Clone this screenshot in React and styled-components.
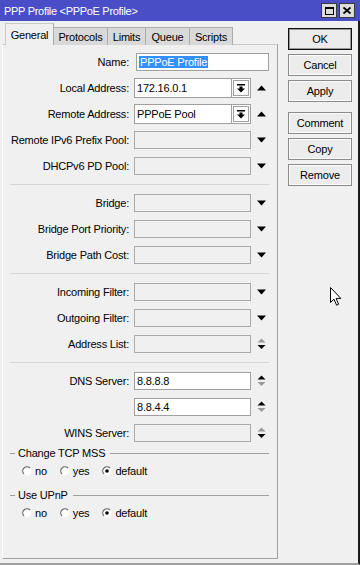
import React from 'react';
import styled, {createGlobalStyle} from 'styled-components';

const Global = createGlobalStyle`
  html, body {
    margin: 0;
    padding: 0;
    background: #f0f0f0;
  }
  body {
    font-family: "Liberation Sans", Arial, sans-serif;
    font-size: 11px;
    letter-spacing: -0.2px;
    color: #000;
  }
`

const Window = styled.div`
  position: relative;
  width: 360px;
  height: 565px;
  display: flex;
  flex-direction: column;
  background: #f0f0f0;
  overflow: hidden;
`
const TitleBar = styled.div`
  height: 21px;
  flex: none;
  display: flex;
  align-items: center;
  justify-content: space-between;
  padding: 0 5px 0 4px;
  background: #4a4ec6;
  color: #fff;
  font-size: 11px;
  letter-spacing: -0.3px;
`
const CaptionButtons = styled.div`
  display: flex;
  gap: 2px;
`
const CaptionButton = styled.div`
  width: 14px;
  height: 13px;
  display: flex;
  align-items: center;
  justify-content: center;
  background: #dcdcdc;
  border: 1px solid #3a3a3a;
`
const Body = styled.div`
  flex: 1;
  display: flex;
  gap: 10px;
  padding: 3px 5px 4px 2px;
  border-right: 2px solid #1c1c1c;
  border-bottom: 2px solid #a0a0a0;
`
const LeftCol = styled.div`
  width: 276px;
  display: flex;
  flex-direction: column;
`
const TabBar = styled.div`
  display: flex;
  align-items: flex-end;
  height: 21px;
  padding-left: 3px;
  margin-bottom: -1px;
  position: relative;
  z-index: 1;
`
const Tab = styled.div`
  box-sizing: border-box;
  width: ${p => p.$w}px;
  height: ${p => (p.$active ? 22 : 18)}px;
  display: flex;
  align-items: center;
  justify-content: center;
  padding-top: ${p => (p.$active ? 0 : 1)}px;
  background: ${p => (p.$active ? '#f0f0f0' : '#d9d9d9')};
  border: 1px solid ${p => (p.$active ? '#c9c9c9' : '#adadad')};
  border-right-color: ${p => (p.$active ? '#a0a0a0' : '#adadad')};
  border-bottom: none;
  margin-left: ${p => (p.$active ? 0 : -1)}px;
`
const Panel = styled.div`
  flex: 1;
  border: 1px solid;
  border-color: #c9c9c9 #a0a0a0 #a0a0a0 #fff;
  padding-top: 4px;
`
const Row = styled.div`
  display: flex;
  align-items: center;
  height: 26px;
`
const Label = styled.div`
  width: 126px;
  margin-right: 5px;
  text-align: right;
  white-space: nowrap;
`
const TextBox = styled.div`
  box-sizing: border-box;
  width: ${p => p.$w || 117}px;
  height: 18px;
  margin-left: ${p => p.$shift || 0}px;
  padding: 0 2px;
  display: flex;
  align-items: center;
  background: ${p => (p.$disabled ? '#f0f0f0' : '#fff')};
  border: 1px solid ${p => (p.$disabled ? '#aaaaaa' : '#a0a0a0')};
  white-space: nowrap;
`
const Selected = styled.span`
  background: #3390ff;
  color: #fff;
  padding: 0 1px;
`
const Combo = styled.div`
  box-sizing: border-box;
  width: 117px;
  height: 20px;
  display: flex;
  background: #fff;
  border: 1px solid #a0a0a0;
`
const ComboText = styled.div`
  flex: 1;
  display: flex;
  align-items: center;
  padding-left: 2px;
  border-right: 1px solid #a0a0a0;
`
const DropButton = styled.div`
  width: 14px;
  margin: 1px;
  display: flex;
  align-items: center;
  justify-content: center;
  border: 1px solid #a0a0a0;
  background: #fff;
`
const ArrowSlot = styled.div`
  width: 9px;
  margin-left: 6px;
  display: flex;
  align-items: center;
  justify-content: center;
`
const Separator = styled.div`
  height: 1px;
  margin: 5px 8px 5px 7px;
  background: #d6d6d6;
`
const Group = styled.div`
  margin-top: 0;
  margin-bottom: 8px;
`
const GroupHeader = styled.div`
  display: flex;
  align-items: center;
  gap: 3px;
  height: 14px;
  padding: 0 8px 0 7px;
  &::before {
    content: '';
    width: 5px;
    height: 1px;
    background: #a0a0a0;
  }
  &::after {
    content: '';
    flex: 1;
    height: 1px;
    margin-left: 2px;
    background: #a0a0a0;
  }
`
const RadioRow = styled.div`
  display: flex;
  align-items: center;
  gap: 13px;
  height: 18px;
  margin-top: 2px;
  padding-left: 19px;
`
const RadioItem = styled.label`
  display: flex;
  align-items: center;
  gap: 3px;
`
const ButtonCol = styled.div`
  width: 64px;
  display: flex;
  flex-direction: column;
  gap: 4px;
  padding-top: 4px;
`
const Button = styled.div`
  box-sizing: border-box;
  height: 22px;
  display: flex;
  align-items: center;
  justify-content: center;
  margin-top: ${p => (p.$spaced ? 6 : 0)}px;
  background: #ececec;
  border: 1px solid ${p => (p.$default ? '#111' : '#8a8a8a')};
  box-shadow: inset 0 0 0 1px ${p => (p.$default ? '#9a9a9a' : '#fbfbfb')};
`
const Cursor = styled.svg`
  position: absolute;
  left: 330px;
  top: 287px;
`

const UpArrow = () => (
  <svg width="9" height="6" viewBox="0 0 9 6"><path d="M0 5.5L4.5 0.5L9 5.5Z" fill="#000"/></svg>
)
const DownArrow = () => (
  <svg width="9" height="6" viewBox="0 0 9 6"><path d="M0 0.5L9 0.5L4.5 5.5Z" fill="#000"/></svg>
)
const Spin = ({up, down}) => (
  <svg width="9" height="12" viewBox="0 0 9 12">
    <path d="M0.5 4.5L4.5 0.5L8.5 4.5Z" fill={up}/>
    <path d="M0.5 7L8.5 7L4.5 11Z" fill={down}/>
  </svg>
)
const DropIcon = () => (
  <svg width="8" height="9" viewBox="0 0 8 9">
    <path d="M0 0h8v1.5H0z M2.5 2.5h3v2h2.5L4 8.5 0 4.5h2.5z" fill="#000"/>
  </svg>
)
const Radio = ({checked}) => (
  <svg width="10" height="10" viewBox="0 0 10 10">
    <circle cx="5" cy="5" r="4.3" fill="#fff"/>
    <path d="M1.96 8.04A4.3 4.3 0 0 1 8.04 1.96" fill="none" stroke="#6a6a6a" strokeWidth="1.2"/>
    {checked && <circle cx="5" cy="5" r="1.8" fill="#000"/>}
  </svg>
)

const GREY = '#9a9a9a';

const tabs = [
  {name: 'General', w: 49, active: true},
  {name: 'Protocols', w: 55},
  {name: 'Limits', w: 39},
  {name: 'Queue', w: 45},
  {name: 'Scripts', w: 44},
];

const RadioGroup = ({title}) => (
  <Group>
    <GroupHeader>{title}</GroupHeader>
    <RadioRow>
      <RadioItem><Radio/>no</RadioItem>
      <RadioItem><Radio/>yes</RadioItem>
      <RadioItem><Radio checked/>default</RadioItem>
    </RadioRow>
  </Group>
);

const EmptyRow = ({label, arrow}) => (
  <Row>
    <Label>{label}</Label>
    <TextBox $disabled/>
    <ArrowSlot>{arrow || <DownArrow/>}</ArrowSlot>
  </Row>
);

const ComboRow = ({label, value}) => (
  <Row>
    <Label>{label}</Label>
    <Combo>
      <ComboText>{value}</ComboText>
      <DropButton><DropIcon/></DropButton>
    </Combo>
    <ArrowSlot><UpArrow/></ArrowSlot>
  </Row>
);

export default function App() {
  return (
    <Window>
      <Global/>
      <TitleBar>
        <span>{'PPP Profile <PPPoE Profile>'}</span>
        <CaptionButtons>
          <CaptionButton>
            <svg width="9" height="8" viewBox="0 0 9 8">
              <rect x="0.5" y="0.5" width="8" height="7" fill="none" stroke="#000"/>
              <rect x="0" y="0" width="9" height="2" fill="#000"/>
            </svg>
          </CaptionButton>
          <CaptionButton>
            <svg width="8" height="7" viewBox="0 0 8 7">
              <path d="M0.5 0.5L7.5 6.5M7.5 0.5L0.5 6.5" stroke="#000" strokeWidth="1.8"/>
            </svg>
          </CaptionButton>
        </CaptionButtons>
      </TitleBar>
      <Body>
        <LeftCol>
          <TabBar>
            {tabs.map(t => (
              <Tab key={t.name} $w={t.w} $active={t.active}>{t.name}</Tab>
            ))}
          </TabBar>
          <Panel>
            <Row>
              <Label>Name:</Label>
              <TextBox $w={133} $shift={2}><Selected>PPPoE Profile</Selected></TextBox>
            </Row>
            <ComboRow label="Local Address:" value="172.16.0.1"/>
            <ComboRow label="Remote Address:" value="PPPoE Pool"/>
            <EmptyRow label="Remote IPv6 Prefix Pool:"/>
            <EmptyRow label="DHCPv6 PD Pool:"/>
            <Separator/>
            <EmptyRow label="Bridge:"/>
            <EmptyRow label="Bridge Port Priority:"/>
            <EmptyRow label="Bridge Path Cost:"/>
            <Separator/>
            <EmptyRow label="Incoming Filter:"/>
            <EmptyRow label="Outgoing Filter:"/>
            <EmptyRow label="Address List:" arrow={<Spin up={GREY} down="#000"/>}/>
            <Separator/>
            <Row>
              <Label>DNS Server:</Label>
              <TextBox>8.8.8.8</TextBox>
              <ArrowSlot><Spin up="#000" down={GREY}/></ArrowSlot>
            </Row>
            <Row>
              <Label/>
              <TextBox>8.8.4.4</TextBox>
              <ArrowSlot><Spin up="#000" down={GREY}/></ArrowSlot>
            </Row>
            <EmptyRow label="WINS Server:" arrow={<Spin up={GREY} down="#000"/>}/>
            <RadioGroup title="Change TCP MSS"/>
            <RadioGroup title="Use UPnP"/>
          </Panel>
        </LeftCol>
        <ButtonCol>
          <Button $default>OK</Button>
          <Button>Cancel</Button>
          <Button>Apply</Button>
          <Button $spaced>Comment</Button>
          <Button>Copy</Button>
          <Button>Remove</Button>
        </ButtonCol>
      </Body>
      <Cursor width="12" height="19" viewBox="0 0 12 19">
        <path d="M0.5 0.5L0.5 15.5L4 12.2L6.6 18.2L8.6 17.3L6.1 11.4L10.8 11.4Z" fill="#fff" stroke="#000" strokeWidth="1" strokeLinejoin="miter"/>
      </Cursor>
    </Window>
  );
}
